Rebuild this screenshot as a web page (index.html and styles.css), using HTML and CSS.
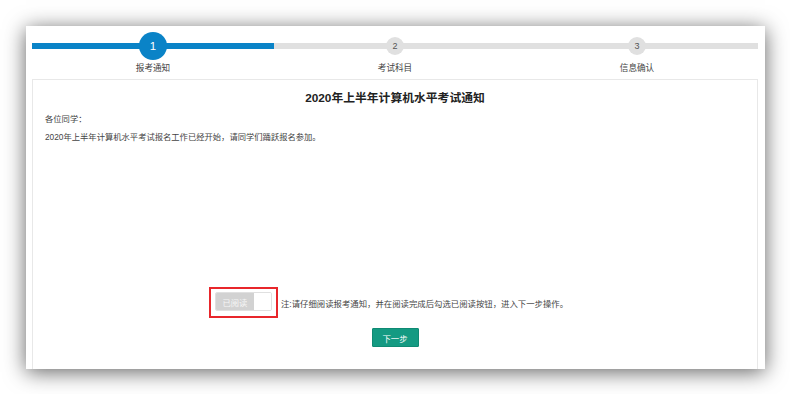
FILE: index.html
```html
<!DOCTYPE html>
<html lang="zh-CN">
<head>
<meta charset="utf-8">
<title>报考通知</title>
<link rel="stylesheet" href="styles.css">
</head>
<body>
<div class="window">
  <div class="steps">
    <div class="step done">
      <div class="step-head"><span class="dot">1</span></div>
      <div class="step-label">报考通知</div>
    </div>
    <div class="step">
      <div class="step-head"><span class="dot">2</span></div>
      <div class="step-label">考试科目</div>
    </div>
    <div class="step">
      <div class="step-head"><span class="dot">3</span></div>
      <div class="step-label">信息确认</div>
    </div>
  </div>
  <div class="panel">
    <h1 class="title">2020年上半年计算机水平考试通知</h1>
    <div class="notice-body">
      <p>各位同学：</p>
      <p>2020年上半年计算机水平考试报名工作已经开始，请同学们踊跃报名参加。</p>
    </div>
    <div class="confirm-row">
      <div class="highlight">
        <div class="toggle"><span class="toggle-text">已阅读</span><span class="toggle-knob"></span></div>
      </div>
      <span class="hint">注:请仔细阅读报考通知，并在阅读完成后勾选已阅读按钮，进入下一步操作。</span>
    </div>
    <div class="actions">
      <button class="next-btn">下一步</button>
    </div>
  </div>
</div>
</body>
</html>
```

FILE: styles.css
```css
html, body {
  margin: 0;
  padding: 0;
  background: #ffffff;
}
body {
  width: 790px;
  height: 394px;
  overflow: hidden;
  font-family: "Liberation Sans", "Noto Sans CJK SC", sans-serif;
}
.window {
  margin: 26px 0 0 26px;
  width: 739px;
  height: 343px;
  box-sizing: border-box;
  padding: 6px 7px 0 6px;
  background: #ffffff;
  box-shadow: 0 3px 20px rgba(0, 0, 0, 0.62);
  overflow: hidden;
}
.steps {
  display: grid;
  grid-template-columns: 1fr 1fr 1fr;
  width: 726px;
}
.step {
  display: flex;
  flex-direction: column;
  align-items: center;
}
.step-head {
  align-self: stretch;
  height: 28px;
  display: flex;
  align-items: center;
  justify-content: center;
  background: linear-gradient(to bottom, transparent 11px, #e0e0e0 11px, #e0e0e0 17px, transparent 17px);
}
.step.done .step-head {
  background: linear-gradient(to bottom, transparent 11px, #0a83c7 11px, #0a83c7 17px, transparent 17px);
}
.dot {
  width: 18px;
  height: 18px;
  border-radius: 50%;
  background: #e0e0e0;
  color: #555555;
  font-size: 9px;
  display: flex;
  align-items: center;
  justify-content: center;
}
.step.done .dot {
  width: 28px;
  height: 28px;
  background: #0a83c7;
  color: #ffffff;
  font-size: 11.5px;
}
.step-label {
  margin-top: 2px;
  line-height: 12px;
  font-size: 8.6px;
  color: #444444;
}
.panel {
  margin-top: 5px;
  border: 1px solid #e8e8e8;
  height: 400px;
}
.title {
  margin: 10px 0 0;
  text-align: center;
  font-size: 11.8px;
  line-height: 16px;
  font-weight: bold;
  color: #222222;
}
.notice-body {
  margin-top: 4px;
  padding-left: 12px;
  height: 177px;
  font-size: 8.3px;
  color: #444444;
}
.notice-body p {
  margin: 0;
  line-height: 18px;
}
.confirm-row {
  display: flex;
  align-items: center;
  justify-content: center;
  padding-right: 13px;
}
.highlight {
  border: 2px solid #e8262b;
  padding: 3px 4px 5px 4px;
  display: flex;
}
.toggle {
  display: flex;
  width: 57px;
  height: 19px;
  box-sizing: border-box;
  border: 1px solid #e0e0e0;
  border-radius: 2px;
  overflow: hidden;
}
.toggle-text {
  width: 38px;
  background: #d2d2d2;
  color: #f6f6f6;
  font-size: 8.3px;
  display: flex;
  align-items: center;
  justify-content: center;
}
.toggle-knob {
  flex: 1;
  background: #ffffff;
}
.hint {
  margin-left: 3px;
  font-size: 8.4px;
  color: #444444;
}
.actions {
  display: flex;
  justify-content: center;
  margin-top: 10px;
}
.next-btn {
  width: 47px;
  height: 19px;
  border: 1px solid #0f8a73;
  border-radius: 1px;
  background: #149a82;
  color: #ffffff;
  font-family: "Liberation Sans", "Noto Sans CJK SC", sans-serif;
  font-size: 8.4px;
  padding: 0;
  cursor: pointer;
}
```
